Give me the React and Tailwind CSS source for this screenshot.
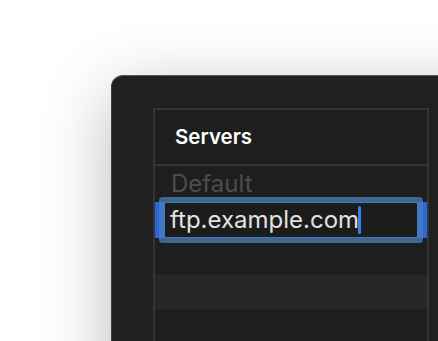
export default function App() {
    const rows = [
        { id: 'default', label: 'Default' },
        { id: 'edit' },
        { id: 'empty-1' },
        { id: 'empty-2', striped: true },
        { id: 'empty-3' },
    ];

    return (
        <div className="h-[341px] w-[438px] overflow-hidden bg-white" style={{ fontFamily: 'Inter, "Noto Sans", sans-serif' }}>
            <div className="ml-[111px] mt-[75px] h-[320px] w-[400px] rounded-tl-[12px] border border-[#3e3e3e] border-t-[#565656] bg-[#202020] pl-[41px] pt-[32px] shadow-[0_18px_70px_rgba(0,0,0,0.28)]">
                <div className="w-[276px] border-2 border-[#353535] bg-[#1e1e1e]">
                    {/* header */}
                    <div className="flex h-[56px] items-center border-b-2 border-[#353535] pl-[20px]">
                        <span className="text-[20.5px] font-semibold text-white">Servers</span>
                    </div>

                    {rows.map((row) =>
                        row.id === 'edit' ? (
                            <div key={row.id} className="relative h-[36px] bg-[#2c67da]">
                                <div className="absolute inset-y-[1px] left-[10px] right-[10px] flex items-center rounded-[1px] bg-[#1c1c1c] pl-[5px] shadow-[0_0_0_6px_rgba(72,128,182,0.75)]">
                                    <span className="text-[24px] leading-none text-[#e2e2e2]">ftp.example.com</span>
                                    <span className="ml-[-1px] h-[28px] w-[3px] rounded-full bg-[#3a7ff0]" />
                                </div>
                            </div>
                        ) : (
                            <div
                                key={row.id}
                                className={`flex h-[36px] items-center pl-[16px] ${row.striped ? 'bg-[#272727]' : ''}`}
                            >
                                {row.label && <span className="text-[24px] text-[#4d4d4d]">{row.label}</span>}
                            </div>
                        )
                    )}
                </div>
            </div>
        </div>
    );
}
